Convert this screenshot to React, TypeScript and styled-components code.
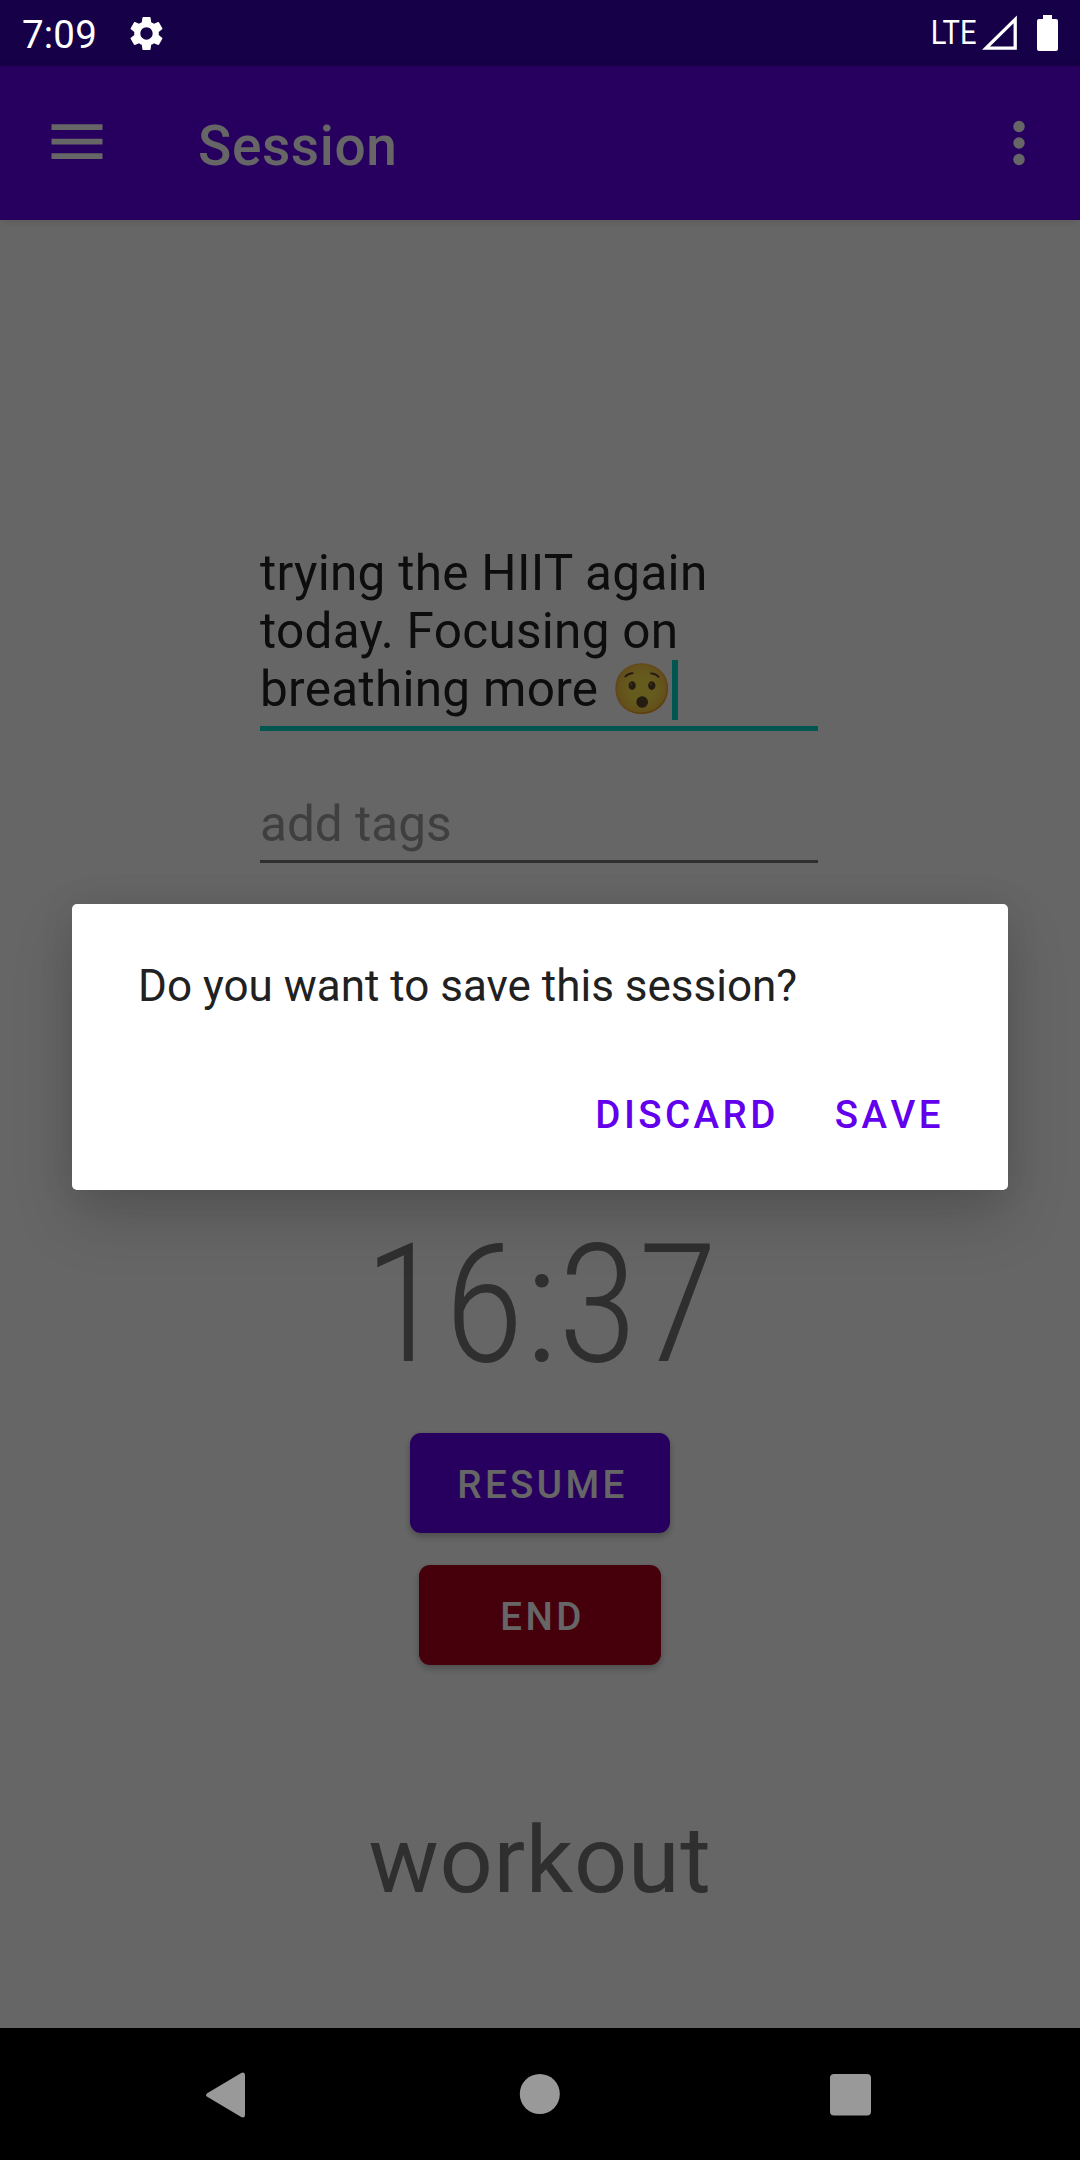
import React from "react";
import styled, { createGlobalStyle } from "styled-components";
import { MdSettings } from "react-icons/md";

const GlobalStyle = createGlobalStyle`
  * { box-sizing: border-box; }
  html, body { margin: 0; padding: 0; }
  body {
    width: 1080px;
    height: 2160px;
    overflow: hidden;
    font-family: Roboto, "Liberation Sans", sans-serif;
    -webkit-font-smoothing: antialiased;
  }
`;

const Screen = styled.div`
  width: 1080px;
  height: 2160px;
  display: flex;
  flex-direction: column;
  background: #000;
`;

const StatusBar = styled.header`
  height: 66px;
  flex: none;
  display: flex;
  align-items: flex-start;
  justify-content: space-between;
  padding: 0 22px;
  background: #160048;
  color: #fff;
`;

const StatusGroup = styled.div`
  display: flex;
  align-items: flex-start;
`;

const Clock = styled.span`
  width: 104px;
  font-size: 38.5px;
  line-height: 70px;
  letter-spacing: 0.2px;
`;

const GearIcon = styled(MdSettings)`
  width: 41px;
  height: 41px;
  margin-top: 13px;
`;

const Network = styled.span`
  display: inline-block;
  font-size: 33.5px;
  line-height: 66px;
  transform: scaleX(0.87);
  transform-origin: right;
  margin-right: 5px;
`;

const SignalIcon = styled.svg`
  width: 36px;
  height: 36px;
  margin-top: 15px;
  margin-right: 19px;
`;

const BatteryIcon = styled.svg`
  width: 21px;
  height: 36px;
  margin-top: 15px;
`;

const AppArea = styled.div`
  position: relative;
  height: 1962px;
  flex: none;
  display: flex;
  flex-direction: column;
  background: #fff;
`;

const AppBar = styled.div`
  height: 154px;
  flex: none;
  display: flex;
  align-items: center;
  padding: 0 55px 0 51px;
  background: #6200ee;
  color: #fff;
  box-shadow: 0 2px 9px rgba(0, 0, 0, 0.12);
`;

const MenuIcon = styled.svg`
  width: 52px;
  height: 36px;
  margin-bottom: 2px;
`;

const Title = styled.h1`
  flex: 1;
  margin: 0 0 0 95px;
  font-size: 55px;
  font-weight: 500;
  line-height: 66px;
  padding-top: 5px;
  letter-spacing: 0.6px;
`;

const OverflowIcon = styled.svg`
  width: 12px;
  height: 46px;
`;

const Content = styled.main`
  flex: 1;
  display: flex;
  flex-direction: column;
  align-items: center;
  padding-top: 324px;
`;

const Field = styled.div<{ $active?: boolean }>`
  width: 558px;
  margin-right: 2px;
  margin-bottom: ${(p) => (p.$active ? 64 : 0)}px;
  padding-bottom: ${(p) => (p.$active ? 8 : 7)}px;
  border-bottom: ${(p) => (p.$active ? "5px solid #03dac5" : "3px solid #757575")};
  color: ${(p) => (p.$active ? "#212121" : "#9e9e9e")};
  font-size: 49.5px;
  line-height: 58px;
  letter-spacing: ${(p) => (p.$active ? 0.28 : 0)}px;
  white-space: nowrap;
`;

const NoteLine = styled.div`
  display: flex;
  height: 58px;
  white-space: pre;
`;

const Emoji = styled.span`
  opacity: 0.87;
`;

const Caret = styled.span`
  width: 6px;
  height: 60px;
  margin-left: -1px;
  background: #03dac5;
`;

const Timer = styled.div`
  margin: 345px 0 31px;
  padding-left: 2px;
  font-size: 165px;
  font-weight: 300;
  font-stretch: 75%;
  font-family: "Roboto Condensed", Roboto, sans-serif;
  line-height: 194px;
  color: #757575;
`;

const ActionButton = styled.button<{ $color: string; $width: number }>`
  width: ${(p) => p.$width}px;
  height: 100px;
  margin: 0 0 32px;
  padding: 4px 0 0 5px;
  border: 0;
  border-radius: 11px;
  background: ${(p) => p.$color};
  color: #fff;
  font: 500 38.5px/46px Roboto, sans-serif;
  letter-spacing: 0.0893em;
  box-shadow: 0 4px 7px rgba(0, 0, 0, 0.22), 0 0 4px rgba(0, 0, 0, 0.08);
`;

const Activity = styled.div`
  margin-top: 108px;
  font-size: 93.5px;
  line-height: 110px;
  letter-spacing: 0.0074em;
  color: #757575;
`;

const Scrim = styled.div`
  position: absolute;
  inset: 0;
  display: grid;
  place-items: center;
  background: rgba(0, 0, 0, 0.6);
`;

const Dialog = styled.section`
  width: 936px;
  height: 286px;
  display: flex;
  flex-direction: column;
  justify-content: space-between;
  padding: 55px 64px 47px 66px;
  border-radius: 5px;
  background: #fff;
  box-shadow: 0 28px 60px rgba(0, 0, 0, 0.17), 0 0 36px rgba(0, 0, 0, 0.08);
`;

const Message = styled.p`
  margin: 0;
  font-size: 44px;
  line-height: 54px;
  color: #212121;
`;

const DialogActions = styled.div`
  display: flex;
  justify-content: flex-end;
  gap: 56px;
`;

const TextButton = styled.button`
  padding: 0;
  border: 0;
  background: none;
  color: #6200ee;
  font: 500 38.5px/56px Roboto, sans-serif;
  font-kerning: none;
  letter-spacing: 0.0893em;
`;

const NavBar = styled.nav`
  height: 132px;
  flex: none;
  display: flex;
  justify-content: space-between;
  padding: 44px 209px 0 206px;
`;

const NavIcon = styled.svg`
  width: 42px;
  height: 46px;
  fill: #999;
`;

export default function App() {
  return (
    <Screen>
      <GlobalStyle />
      <StatusBar>
        <StatusGroup>
          <Clock>7:09</Clock>
          <GearIcon />
        </StatusGroup>
        <StatusGroup>
          <Network>LTE</Network>
          <SignalIcon viewBox="0 0 36 36">
            <path d="M4 33.200H33.200V4.400Z" fill="none" stroke="#fff" strokeWidth="3.300" />
          </SignalIcon>
          <BatteryIcon viewBox="0 0 21 36">
            <path d="M6 0h9v4h4q2 0 2 2v28q0 2-2 2H2q-2 0-2-2V6q0-2 2-2h4z" fill="#fff" />
          </BatteryIcon>
        </StatusGroup>
      </StatusBar>
      <AppArea>
        <AppBar>
          <MenuIcon viewBox="0 0 52 36">
            <path d="M0.500 0.300h51v5.700h-51zM0.500 14.800h51v5.700h-51zM0.500 29.300h51v5.700h-51z" fill="#fff" />
          </MenuIcon>
          <Title>Session</Title>
          <OverflowIcon viewBox="0 0 12 46" fill="#fff">
            <circle cx="6" cy="6.500" r="5.700" />
            <circle cx="6" cy="23" r="5.700" />
            <circle cx="6" cy="39.500" r="5.700" />
          </OverflowIcon>
        </AppBar>
        <Content>
          <Field $active>
            <NoteLine>trying the HIIT again</NoteLine>
            <NoteLine>today. Focusing on</NoteLine>
            <NoteLine>
              {"breathing more "}
              <Emoji>😯</Emoji>
              <Caret />
            </NoteLine>
          </Field>
          <Field>add tags</Field>
          <Timer>16:37</Timer>
          <ActionButton $color="#6200ee" $width={260}>RESUME</ActionButton>
          <ActionButton $color="#b00020" $width={242}>END</ActionButton>
          <Activity>workout</Activity>
        </Content>
        <Scrim>
          <Dialog role="dialog">
            <Message>Do you want to save this session?</Message>
            <DialogActions>
              <TextButton>DISCARD</TextButton>
              <TextButton>SAVE</TextButton>
            </DialogActions>
          </Dialog>
        </Scrim>
      </AppArea>
      <NavBar>
        <NavIcon viewBox="0 0 42 46">
          <path d="M1.200 21.200 34.800 1.200q4.200-2 4.200 2v39.600q0 4-4.200 2L1.200 24.800q-2.400-1.800 0-3.600z" />
        </NavIcon>
        <NavIcon viewBox="0 0 42 46">
          <circle cx="21.800" cy="22" r="20" />
        </NavIcon>
        <NavIcon viewBox="0 0 42 46">
          <rect x="1" y="2" width="41" height="41.500" rx="4" />
        </NavIcon>
      </NavBar>
    </Screen>
  );
}
